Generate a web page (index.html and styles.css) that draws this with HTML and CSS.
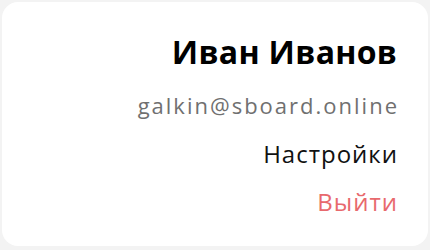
FILE: index.html
```html
<!DOCTYPE html>
<html lang="ru">
<head>
  <meta charset="UTF-8" />
  <title>Профиль</title>
  <link rel="stylesheet" href="styles.css">
</head>
<body>
  <div class="card">
    <div class="name">Иван Иванов</div>
    <div class="email">galkin@sboard.online</div>
    <a class="item" href="#">Настройки</a>
    <a class="item logout" href="#">Выйти</a>
  </div>
</body>
</html>
```

FILE: styles.css
```css
body {
  margin: 0;
  padding: 2px;
  background-color: #f3f3f3;
  font-family: "Open Sans", sans-serif;
}
.card {
  height: 244px;
  box-sizing: border-box;
  background: #fff;
  border-radius: 16px;
  padding: 30px 31px 0 0;
  display: flex;
  flex-direction: column;
  align-items: flex-end;
}
.name {
  font-size: 32px;
  font-weight: 700;
  color: #000;
  line-height: 40px;
  letter-spacing: 0.3px;
  margin-right: -0.3px;
}
.email {
  margin-top: 13px;
  margin-right: -2px;
  font-size: 22px;
  letter-spacing: 2px;
  color: #707070;
  line-height: 40px;
}
.item {
  margin-top: 9px;
  margin-right: -1px;
  font-size: 24px;
  letter-spacing: 1px;
  color: #111;
  text-decoration: none;
  line-height: 40px;
}
.logout {
  margin-top: 8px;
  color: #e8696d;
}
```
